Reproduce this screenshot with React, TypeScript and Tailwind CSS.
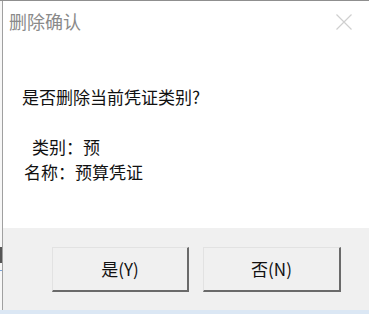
export default function App() {
  const font = { fontFamily: '"Noto Sans CJK SC", "Liberation Sans", sans-serif' };
  return (
    <div className="w-[369px] h-[314px] flex flex-col bg-[#dbe7f4] overflow-hidden" style={font}>
      <div className="flex flex-1 min-h-0 border-t border-[#8f8f8f]">
        {/* sliver of the window behind */}
        <div className="w-[2px] bg-[#f7f7f7] flex flex-col">
          <div className="h-[246px]" />
          <div className="h-[16px] bg-[#555]" />
          <div className="h-[7px]" />
          <div className="h-[1px] bg-[#7aa3d8]" />
        </div>
        {/* dialog */}
        <div className="flex-1 flex flex-col border-l border-[#a0a0a0] bg-white">
          <div className="h-[40px] flex items-center justify-between pl-[6px] pr-[17px]">
            <span className="text-[18px] text-[#8a8a8a] leading-none">删除确认</span>
            <svg width="16" height="16" viewBox="0 0 16 16" className="mt-[2px]">
              <path d="M0.5 0.5 L15.5 15.5 M15.5 0.5 L0.5 15.5" stroke="#cfcfcf" strokeWidth="1.2" fill="none" />
            </svg>
          </div>
          <div className="flex-1 pt-[43px] pl-[19px] text-[17px] leading-[25px] text-[#111]">
            <div>是否删除当前凭证类别?</div>
            <div className="h-[25px]" />
            <div className="pl-[10px]">类别：预</div>
            <div className="pl-[2px]">名称：预算凭证</div>
          </div>
          <div className="h-[82px] bg-[#f0f0f0] pt-[19px] pl-[49px] flex gap-[14px]">
            <button className="w-[137px] h-[45px] bg-[#f0f0f0] border-t border-l border-[#e2e2e2] border-b-2 border-r-2 border-b-[#6a6a6a] border-r-[#6a6a6a] text-[17px] text-[#111] flex items-center justify-center">
              是(Y)
            </button>
            <button className="w-[138px] h-[45px] bg-[#f0f0f0] border-t border-l border-[#e2e2e2] border-b-2 border-r-2 border-b-[#6a6a6a] border-r-[#6a6a6a] text-[17px] text-[#111] flex items-center justify-center">
              否(N)
            </button>
          </div>
        </div>
      </div>
      <div className="h-[4px]" />
    </div>
  );
}
